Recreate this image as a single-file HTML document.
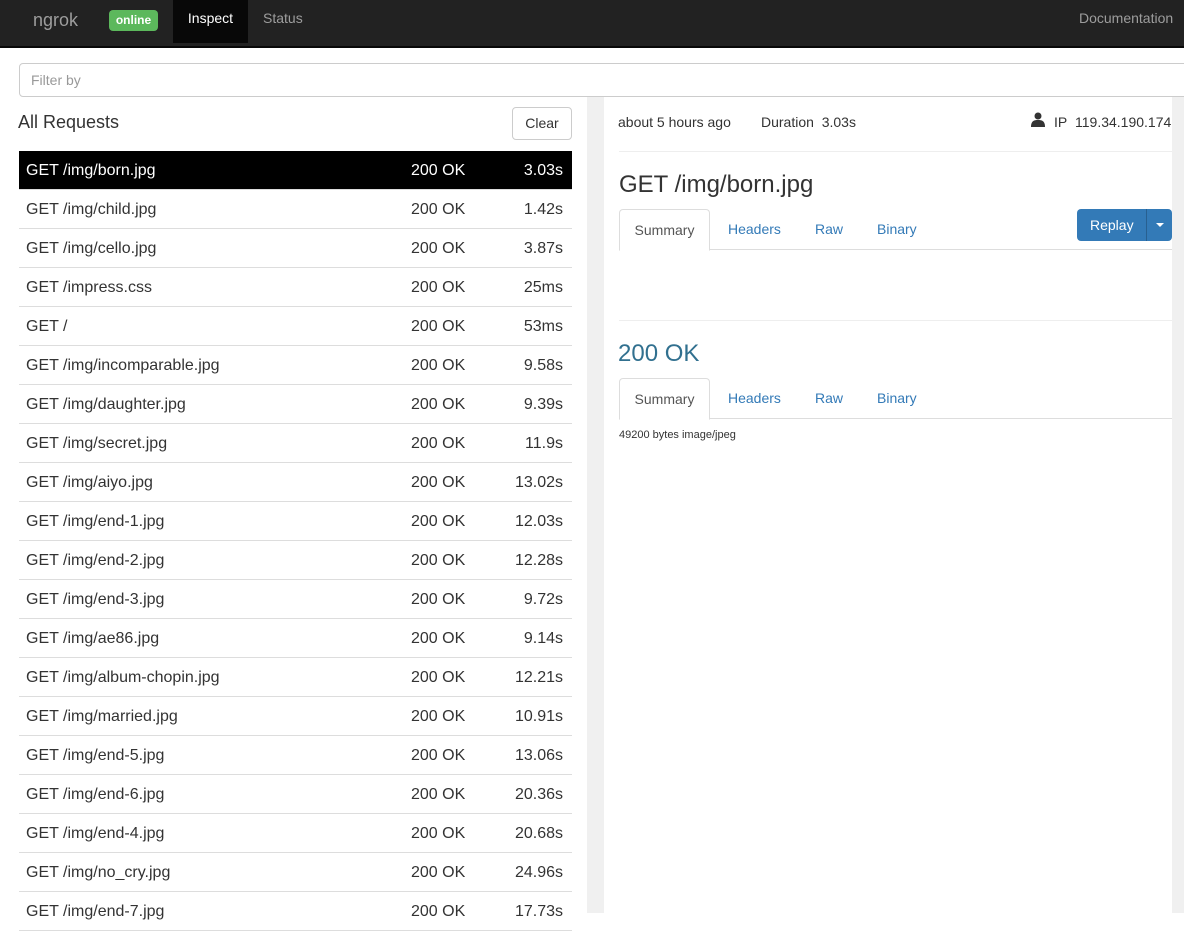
<!DOCTYPE html><html><head><style>
body{margin:0;width:1184px;height:913px;overflow:hidden;font-family:"Liberation Sans",sans-serif;color:#333;background:#fff;position:relative}
.nav{position:absolute;left:0;top:0;width:1184px;height:46px;background:#222;border-bottom:2px solid #080808}
.nav span{position:absolute;font-size:14px}
.a{position:absolute}
table{border-collapse:collapse;table-layout:fixed;position:absolute;left:19px;top:151px;width:553px;font-size:16px}
td{border-bottom:1px solid #ddd;padding:2px 0 0 7px;height:36px;box-sizing:content-box}
td.p{width:385px}
td.s{width:95px;padding-left:0}
td.d{text-align:right;padding-right:9px}
tr.sel td{background:#000;color:#fff}
.tabs{position:absolute;left:619px;width:553px;height:40px;border-bottom:1px solid #ddd;font-size:14px}
.tabs div{position:absolute;top:0;height:40px;line-height:40px;color:#337ab7}
.tabs .act{border:1px solid #ddd;border-bottom:1px solid #fff;border-radius:4px 4px 0 0;color:#555;left:0;width:89px;text-align:center;background:#fff}
</style></head><body>
<div class="nav">
<span style="left:33px;top:10px;font-size:18px;color:#9d9d9d">ngrok</span>
<span style="left:109px;top:10px;width:49px;height:21px;background:#5cb85c;border-radius:4px;color:#fff;font-weight:bold;font-size:12px;text-align:center;line-height:21px">online</span>
<span style="left:173px;top:0;width:75px;height:43px;background:#080808;color:#fff;text-align:center;line-height:36px">Inspect</span>
<span style="left:263px;top:10px;color:#9d9d9d">Status</span>
<span style="left:1079px;top:10px;color:#9d9d9d">Documentation</span>
</div>
<div class="a" style="left:19px;top:63px;width:1180px;height:32px;border:1px solid #ccc;border-radius:4px"></div>
<div class="a" style="left:31px;top:72px;font-size:14px;color:#999">Filter by</div>
<div class="a" style="left:587px;top:97px;width:17px;height:816px;background:#f0f0f0"></div>
<div class="a" style="left:1172px;top:97px;width:12px;height:816px;background:#f0f0f0"></div>
<div class="a" style="left:18px;top:112px;font-size:18px">All Requests</div>
<div class="a" style="left:512px;top:107px;width:58px;height:31px;border:1px solid #ccc;border-radius:4px;font-size:14px;text-align:center;line-height:31px">Clear</div>
<table>
<tr class="sel"><td class="p">GET /img/born.jpg</td><td class="s">200 OK</td><td class="d">3.03s</td></tr>
<tr><td>GET /img/child.jpg</td><td class="s">200 OK</td><td class="d">1.42s</td></tr>
<tr><td>GET /img/cello.jpg</td><td class="s">200 OK</td><td class="d">3.87s</td></tr>
<tr><td>GET /impress.css</td><td class="s">200 OK</td><td class="d">25ms</td></tr>
<tr><td>GET /</td><td class="s">200 OK</td><td class="d">53ms</td></tr>
<tr><td>GET /img/incomparable.jpg</td><td class="s">200 OK</td><td class="d">9.58s</td></tr>
<tr><td>GET /img/daughter.jpg</td><td class="s">200 OK</td><td class="d">9.39s</td></tr>
<tr><td>GET /img/secret.jpg</td><td class="s">200 OK</td><td class="d">11.9s</td></tr>
<tr><td>GET /img/aiyo.jpg</td><td class="s">200 OK</td><td class="d">13.02s</td></tr>
<tr><td>GET /img/end-1.jpg</td><td class="s">200 OK</td><td class="d">12.03s</td></tr>
<tr><td>GET /img/end-2.jpg</td><td class="s">200 OK</td><td class="d">12.28s</td></tr>
<tr><td>GET /img/end-3.jpg</td><td class="s">200 OK</td><td class="d">9.72s</td></tr>
<tr><td>GET /img/ae86.jpg</td><td class="s">200 OK</td><td class="d">9.14s</td></tr>
<tr><td>GET /img/album-chopin.jpg</td><td class="s">200 OK</td><td class="d">12.21s</td></tr>
<tr><td>GET /img/married.jpg</td><td class="s">200 OK</td><td class="d">10.91s</td></tr>
<tr><td>GET /img/end-5.jpg</td><td class="s">200 OK</td><td class="d">13.06s</td></tr>
<tr><td>GET /img/end-6.jpg</td><td class="s">200 OK</td><td class="d">20.36s</td></tr>
<tr><td>GET /img/end-4.jpg</td><td class="s">200 OK</td><td class="d">20.68s</td></tr>
<tr><td>GET /img/no_cry.jpg</td><td class="s">200 OK</td><td class="d">24.96s</td></tr>
<tr><td>GET /img/end-7.jpg</td><td class="s">200 OK</td><td class="d">17.73s</td></tr>
</table>
<div class="a" style="left:618px;top:114px;font-size:14px">about 5 hours ago</div>
<div class="a" style="left:761px;top:114px;font-size:14px">Duration&nbsp; 3.03s</div>
<svg class="a" style="left:1031px;top:112px" width="14" height="15" viewBox="0 0 14 15"><circle cx="7" cy="4" r="3.5" fill="#333"/><path d="M0 15 C0 9 3 8 7 8 C11 8 14 9 14 15Z" fill="#333"/></svg>
<div class="a" style="left:1054px;top:114px;font-size:14px">IP&nbsp; 119.34.190.174</div>
<div class="a" style="left:619px;top:151px;width:553px;border-top:1px solid #eee"></div>
<div class="a" style="left:619px;top:171px;font-size:24px">GET /img/born.jpg</div>
<div class="tabs" style="top:209px"><div class="act">Summary</div><div style="left:109px">Headers</div><div style="left:196px">Raw</div><div style="left:258px">Binary</div></div>
<div class="a" style="left:1077px;top:209px;width:95px;height:32px;background:#337ab7;border-radius:4px;color:#fff;font-size:14px"><span class="a" style="left:13px;top:8px">Replay</span><div class="a" style="left:69px;top:0;width:1px;height:32px;background:#286090"></div><div class="a" style="left:79px;top:14px;border-left:4px solid transparent;border-right:4px solid transparent;border-top:4px solid #fff"></div></div>
<div class="a" style="left:619px;top:320px;width:553px;border-top:1px solid #eee"></div>
<div class="a" style="left:618px;top:340px;font-size:24px;color:#31708f">200 OK</div>
<div class="tabs" style="top:378px"><div class="act">Summary</div><div style="left:109px">Headers</div><div style="left:196px">Raw</div><div style="left:258px">Binary</div></div>
<div class="a" style="left:619px;top:429px;font-size:11px">49200 bytes image/jpeg</div>
</body></html>
